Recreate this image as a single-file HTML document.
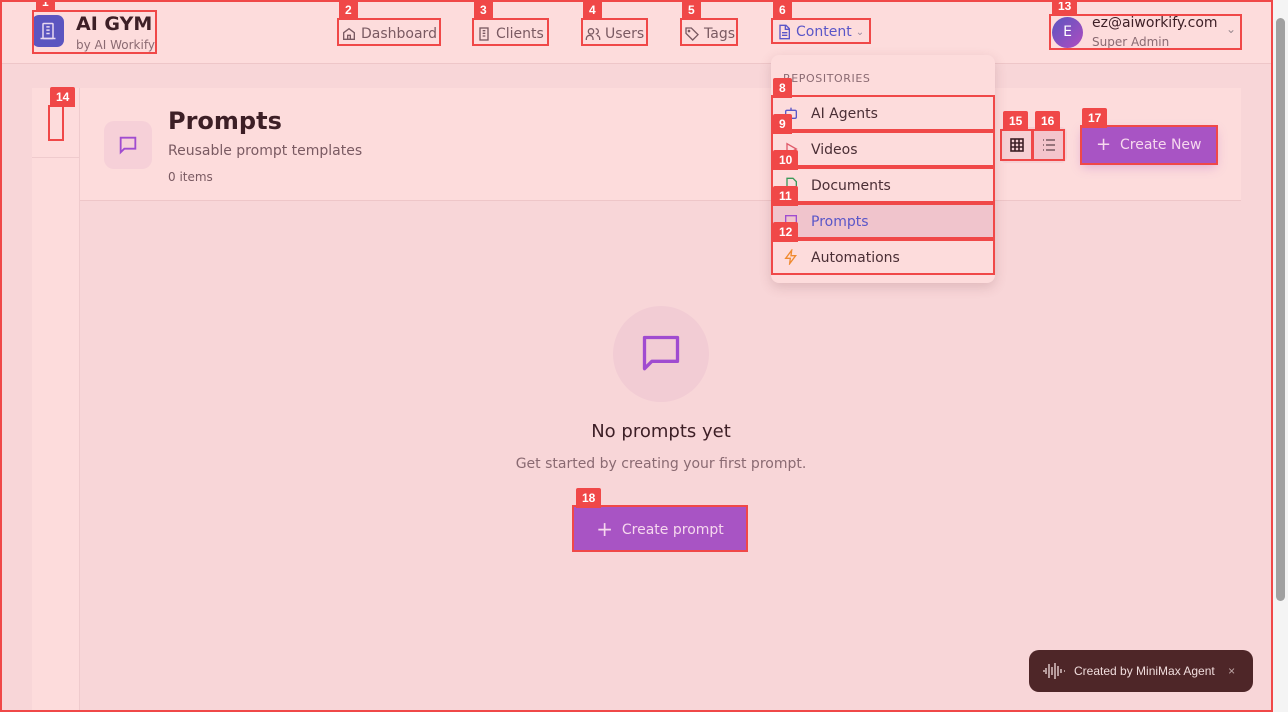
<!DOCTYPE html>
<html><head><meta charset="utf-8"><style>
*{box-sizing:border-box;margin:0;padding:0}
body{width:1288px;height:712px;overflow:hidden;background:#f8d6d8;font-family:"DejaVu Sans","Liberation Sans",sans-serif;position:relative;color:#3d1f26}
.a{position:absolute}
.ob{position:absolute;border:2px solid #f04848}
.tag{position:absolute;background:#f04848;color:#fff;font-size:12px;font-weight:bold;height:20px;line-height:20px;padding:0 6px;border-radius:2px 2px 0 0;font-family:"Liberation Sans",sans-serif}
.nav{position:absolute;top:26px;font-size:14px;color:#7a5a62;display:flex;align-items:center;gap:4px}
.mi{position:absolute;left:783px;font-size:14px;color:#4a2e35}
</style></head><body>
<!-- header -->
<div class="a" style="left:0;top:0;width:1273px;height:64px;background:#fddcdc;border-bottom:1px solid #eec6c8"></div>
<div class="a" style="left:32px;top:15px;width:32px;height:32px;border-radius:7px;background:#5b55c0"></div>
<svg class="a" style="left:38px;top:21px" width="20" height="20" viewBox="0 0 24 24" fill="none" stroke="#e8d8f0" stroke-width="1.8"><rect x="6" y="3" width="12" height="18" rx="1"/><path d="M3 21h18M10 7h4M10 11h4M10 15h4"/></svg>
<div class="a" style="left:76px;top:13px;font-size:19px;font-weight:bold;color:#3d1f26">AI GYM</div>
<div class="a" style="left:76px;top:38px;font-size:12px;color:#8a6a72">by AI Workify</div>
<div class="ob" style="left:32px;top:10px;width:125px;height:44px"></div><div class="tag" style="left:36px;top:-8px">1</div>

<div class="nav" style="left:341px"><svg width="16" height="16" viewBox="0 0 24 24" fill="none" stroke="#7a5a62" stroke-width="2"><path d="M4 10l8-6 8 6v10H4zM10 20v-6h4v6"/></svg>Dashboard</div>
<div class="ob" style="left:337px;top:18px;width:104px;height:28px"></div><div class="tag" style="left:339px;top:0px">2</div>
<div class="nav" style="left:476px"><svg width="16" height="16" viewBox="0 0 24 24" fill="none" stroke="#7a5a62" stroke-width="2"><rect x="6" y="3" width="12" height="18"/><path d="M10 7h4M10 11h4M10 15h4"/></svg>Clients</div>
<div class="ob" style="left:472px;top:18px;width:77px;height:28px"></div><div class="tag" style="left:474px;top:0px">3</div>
<div class="nav" style="left:585px"><svg width="16" height="16" viewBox="0 0 24 24" fill="none" stroke="#7a5a62" stroke-width="2"><circle cx="9" cy="8" r="4"/><path d="M2 21v-2a5 5 0 0 1 10 0v2M16 4a4 4 0 0 1 0 8M22 21v-2a5 5 0 0 0-4-5"/></svg>Users</div>
<div class="ob" style="left:581px;top:18px;width:67px;height:28px"></div><div class="tag" style="left:583px;top:0px">4</div>
<div class="nav" style="left:684px"><svg width="16" height="16" viewBox="0 0 24 24" fill="none" stroke="#7a5a62" stroke-width="2"><path d="M3 3h8l10 10-8 8L3 11z"/><circle cx="7.5" cy="7.5" r="1"/></svg>Tags</div>
<div class="ob" style="left:680px;top:18px;width:58px;height:28px"></div><div class="tag" style="left:682px;top:0px">5</div>
<div class="nav" style="left:776px;top:24px;color:#5a56c8"><svg width="16" height="16" viewBox="0 0 24 24" fill="none" stroke="#5a56c8" stroke-width="2"><path d="M6 2h9l5 5v15H6zM14 2v6h6M9 13h8M9 17h8"/></svg>Content <span style="font-size:10px;color:#9a8aa0">&#8964;</span></div>
<div class="ob" style="left:771px;top:18px;width:100px;height:26px"></div><div class="tag" style="left:773px;top:0px">6</div>

<div class="a" style="left:1052px;top:17px;width:31px;height:31px;border-radius:50%;background:linear-gradient(135deg,#5b55c0,#b04cc0);color:#fff;font-size:14px;text-align:center;line-height:31px">E</div>
<div class="a" style="left:1092px;top:15px;font-size:14px;color:#3d1f26">ez@aiworkify.com</div>
<div class="a" style="left:1092px;top:35px;font-size:12px;color:#8a6a72">Super Admin</div>
<div class="a" style="left:1226px;top:22px;font-size:12px;color:#9a8a90">&#8964;</div>
<div class="ob" style="left:1049px;top:14px;width:193px;height:36px"></div><div class="tag" style="left:1052px;top:-4px">13</div>

<!-- sidebar & card -->
<div class="a" style="left:32px;top:88px;width:48px;height:624px;background:#fddcdc;border-right:1px solid #efcbcd"></div>
<div class="a" style="left:32px;top:157px;width:48px;height:1px;background:#efcbcd"></div>
<div class="ob" style="left:48px;top:105px;width:16px;height:36px;border-width:2px"></div><div class="tag" style="left:50px;top:87px">14</div>
<div class="a" style="left:80px;top:88px;width:1161px;height:113px;background:#fddcdc;border-bottom:1px solid #eec6c8"></div>
<div class="a" style="left:104px;top:121px;width:48px;height:48px;border-radius:10px;background:#f6d0d8"></div>
<svg class="a" style="left:117px;top:134px" width="22" height="22" viewBox="0 0 24 24" fill="none" stroke="#a04cd0" stroke-width="2"><path d="M4 4h16v12H8l-4 4z"/></svg>
<div class="a" style="left:168px;top:107px;font-size:24px;font-weight:bold;color:#3d1f26">Prompts</div>
<div class="a" style="left:168px;top:143px;font-size:14px;color:#7a5a62">Reusable prompt templates</div>
<div class="a" style="left:168px;top:170px;font-size:12px;color:#7a5a62">0 items</div>

<div class="a" style="left:1000px;top:127px;width:67px;height:36px;border-radius:6px;background:#f6d0d4"></div>
<div class="a" style="left:1034px;top:130px;width:30px;height:30px;background:#f4c4cc"></div>
<svg class="a" style="left:1010px;top:138px" width="14" height="14" viewBox="0 0 14 14" fill="none" stroke="#3d1f26" stroke-width="1.6"><rect x="1" y="1" width="12" height="12"/><path d="M5 1v12M9 1v12M1 5h12M1 9h12"/></svg>
<svg class="a" style="left:1042px;top:139px" width="14" height="12" viewBox="0 0 14 12" fill="none" stroke="#7a5a62" stroke-width="1.5"><path d="M1 1h1M1 6h1M1 11h1M4 1h9M4 6h9M4 11h9"/></svg>
<div class="ob" style="left:1000px;top:129px;width:33px;height:32px"></div><div class="tag" style="left:1003px;top:111px">15</div>
<div class="ob" style="left:1032px;top:129px;width:33px;height:32px"></div><div class="tag" style="left:1035px;top:111px">16</div>
<div class="a" style="left:1082px;top:127px;width:134px;height:36px;background:#a854c4;box-shadow:0 4px 10px rgba(168,84,196,.35);color:#f6d8ee;font-size:14px;line-height:36px;padding-left:14px"><span style="font-size:18px;vertical-align:-1px">+</span>&nbsp;&nbsp;Create New</div>
<div class="ob" style="left:1080px;top:125px;width:138px;height:40px"></div><div class="tag" style="left:1082px;top:108px">17</div>

<!-- empty state -->
<div class="a" style="left:613px;top:306px;width:96px;height:96px;border-radius:50%;background:#f2ccd4"></div>
<svg class="a" style="left:639px;top:332px" width="44" height="44" viewBox="0 0 24 24" fill="none" stroke="#a04cd0" stroke-width="1.8" stroke-linejoin="round"><path d="M3 3h18v13H7l-4 4z"/></svg>
<div class="a" style="left:0;width:1322px;top:421px;text-align:center;font-size:18px;color:#3d1f26">No prompts yet</div>
<div class="a" style="left:0;width:1322px;top:456px;text-align:center;font-size:14px;color:#8a6a72">Get started by creating your first prompt.</div>
<div class="a" style="left:574px;top:507px;width:172px;height:44px;background:#a854c4;color:#f6d8ee;font-size:14px;line-height:44px;text-align:center"><span style="font-size:20px;vertical-align:-2px">+</span>&nbsp;&nbsp;Create prompt</div>
<div class="ob" style="left:572px;top:505px;width:176px;height:47px"></div><div class="tag" style="left:576px;top:488px">18</div>

<!-- dropdown -->
<div class="a" style="left:771px;top:55px;width:224px;height:228px;background:#fddcdc;border-radius:8px;box-shadow:0 4px 12px rgba(120,60,70,.2)"></div>
<div class="a" style="left:783px;top:72px;font-size:11px;letter-spacing:.6px;color:#8a6a72">REPOSITORIES</div>
<div class="a" style="left:772px;top:203px;width:222px;height:36px;background:#f0c4cc"></div>
<svg class="a" style="left:783px;top:105px" width="16" height="16" viewBox="0 0 24 24" fill="none" stroke="#5a56c8" stroke-width="2"><rect x="4" y="8" width="16" height="12" rx="2"/><path d="M12 8V4"/></svg>
<div class="mi" style="left:811px;top:106px">AI Agents</div>
<svg class="a" style="left:783px;top:141px" width="16" height="16" viewBox="0 0 24 24" fill="none" stroke="#e05a6a" stroke-width="2"><path d="M6 4l14 8-14 8z"/></svg>
<div class="mi" style="left:811px;top:142px">Videos</div>
<svg class="a" style="left:783px;top:177px" width="16" height="16" viewBox="0 0 24 24" fill="none" stroke="#3a9a5a" stroke-width="2"><path d="M6 2h9l5 5v15H6z"/></svg>
<div class="mi" style="left:811px;top:178px">Documents</div>
<svg class="a" style="left:783px;top:213px" width="16" height="16" viewBox="0 0 24 24" fill="none" stroke="#a04cd0" stroke-width="2"><path d="M4 4h16v12H8l-4 4z"/></svg>
<div class="mi" style="left:811px;top:214px;color:#5a56c8">Prompts</div>
<svg class="a" style="left:783px;top:249px" width="16" height="16" viewBox="0 0 24 24" fill="none" stroke="#f08a30" stroke-width="2"><path d="M13 2L4 14h7l-1 8 9-12h-7z"/></svg>
<div class="mi" style="left:811px;top:250px">Automations</div>
<div class="ob" style="left:771px;top:95px;width:224px;height:36px"></div><div class="tag" style="left:773px;top:78px">8</div>
<div class="ob" style="left:771px;top:131px;width:224px;height:36px"></div><div class="tag" style="left:773px;top:114px">9</div>
<div class="ob" style="left:771px;top:167px;width:224px;height:36px"></div><div class="tag" style="left:773px;top:150px">10</div>
<div class="ob" style="left:771px;top:203px;width:224px;height:36px"></div><div class="tag" style="left:773px;top:186px">11</div>
<div class="ob" style="left:771px;top:239px;width:224px;height:36px"></div><div class="tag" style="left:773px;top:222px">12</div>

<!-- toast -->
<div class="a" style="left:1029px;top:650px;width:224px;height:42px;border-radius:10px;background:#4e2628;color:#f0dcdc;font-size:12px;font-family:'Liberation Sans',sans-serif;line-height:42px;padding-left:45px">Created by MiniMax Agent <span style="margin-left:10px;color:#c0a8a8">×</span></div>
<svg class="a" style="left:1042px;top:661px" width="24" height="20" viewBox="0 0 24 20" fill="none" stroke="#f0dcdc" stroke-width="1.3"><path d="M1 10h2M4 7v6M7 3v14M10 6v8M13 2v16M16 5v10M19 8v4M22 10h1"/></svg>

<!-- outer outline & scrollbar -->
<div class="ob" style="left:0;top:0;width:1273px;height:712px"></div>
<div class="tag" style="left:2px;top:-16px;height:18px">&nbsp;</div>
<div class="a" style="left:1273px;top:0;width:15px;height:712px;background:#f4f4f4"></div>
<div class="a" style="left:1276px;top:18px;width:9px;height:583px;border-radius:5px;background:#a0a0a0"></div>
</body></html>
